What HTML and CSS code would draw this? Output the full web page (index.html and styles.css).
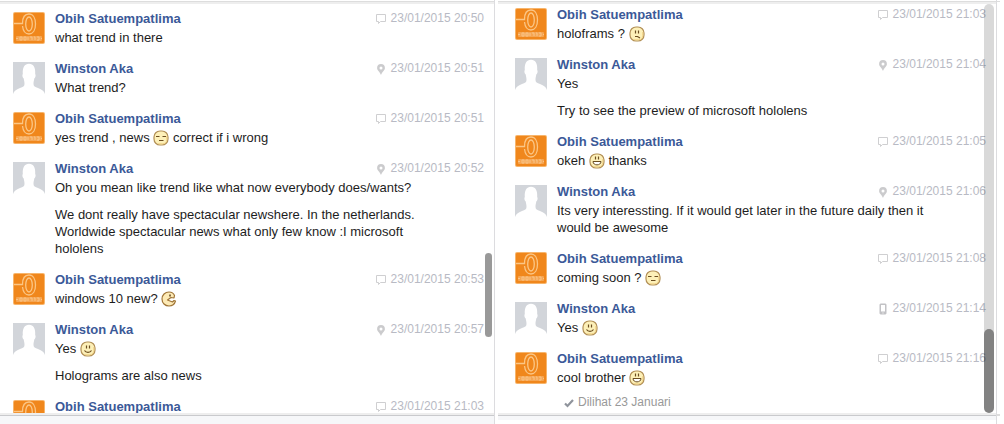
FILE: index.html
```
<!DOCTYPE html>
<html lang="id">
<head>
<meta charset="utf-8">
<title>Obih Satuempatlima</title>
<link rel="stylesheet" href="styles.css">
</head>
<body>
<svg class="sprite" aria-hidden="true">
  <defs>
    <symbol id="logo" viewBox="0 0 32 32">
      <rect width="32" height="32" rx="2" fill="#f7b56c"/>
      <rect x="1" y="1" width="30" height="30" rx="1" fill="#f0871c"/>
      <g fill="none" stroke="#fbc685" stroke-width="1.300">
        <path d="M1 11.500h8.500C9.500 5 12 2 16 2s6.500 4 6.500 10-2.500 10-6.500 10-6-3.500-6.500-8"/>
        <ellipse cx="16" cy="12" rx="3.300" ry="7"/>
      </g>
      <rect x="3" y="24" width="26" height="5" rx="1" fill="#f5a654"/>
      <path d="M3 26.500h2M7 25h2v3H7zM11 25h2v3h-2zM15 25v3M17 25h2v3M21 25h1v3M24 25h2v3h-2M28 26.500h1" fill="none" stroke="#f9c487"/>
    </symbol>
    <symbol id="person" viewBox="0 0 32 32">
      <rect width="32" height="32" fill="#d2d5da"/>
      <path d="M0 32c1-3 3-4.500 7-6 3-1 4.500-1.500 4.500-4 0-2-.3-3-.8-5.500-1.300-1-1.700-3.500-.9-4.500C9.300 5.500 11.500 1.700 16 1.700S22.700 5.500 22.200 12c.8 1 .4 3.500-.9 4.500-.5 2.500-.8 3.500-.8 5.500 0 2.500 1.500 3 4.500 4 4 1.500 6 3 7 6z" fill="#fff"/>
    </symbol>
    <symbol id="chat" viewBox="0 0 10 10">
      <path d="M.5 .5h9v7h-5l-2 2v-2h-2z" fill="none" stroke="#cfcfd1"/>
    </symbol>
    <symbol id="pin" viewBox="0 0 10 10">
      <path d="M5 0a3.900 3.900 0 0 0-3.900 3.900C1.100 6.700 4 7.500 5 11 6 7.500 8.900 6.700 8.900 3.900A3.900 3.900 0 0 0 5 0zm0 2.400a1.500 1.500 0 1 1 0 3 1.500 1.500 0 0 1 0-3z" fill="#cbcbcd" fill-rule="evenodd"/>
    </symbol>
    <symbol id="phone" viewBox="0 0 10 10">
      <path d="M2.500-.5h5l1 1v9l-1 1h-5l-1-1v-9zM3 1v6.500h4V1zM4.500 8.500v1h1v-1z" fill="#c2c2c5" fill-rule="evenodd"/>
    </symbol>
    <symbol id="face" viewBox="0 0 16 16">
      <rect x="1" y="1" width="14" height="14" rx="6" fill="#fdf0b8" stroke="#b28f55" stroke-width="1.200"/>
      <path d="M5 13.700h4.500q4.200 0 4.200-4.200V6" fill="none" stroke="#f3d589"/>
    </symbol>
    <symbol id="smile" viewBox="0 0 16 16">
      <use href="#face"/>
      <path d="M6.500 4.500v3M9.500 4.500v3M4.500 9.500c1.500 2.500 5.500 2.500 7 0" fill="none" stroke="#6b4d20" stroke-width="1.200"/>
    </symbol>
    <symbol id="grin" viewBox="0 0 16 16">
      <use href="#face"/>
      <path d="M6.500 3.500v3M9.500 3.500v3" stroke="#6b4d20" stroke-width="1.200"/>
      <path d="M4 8.500h8c0 4.500-8 4.500-8 0z" fill="#fff" stroke="#6b4d20"/>
    </symbol>
    <symbol id="squint" viewBox="0 0 16 16">
      <use href="#face"/>
      <path d="M3 6.500h3.500M9.500 6.500H13M6 10.500h4.500" stroke="#6b4d20" stroke-width="1.100"/>
    </symbol>
    <symbol id="unsure" viewBox="0 0 16 16">
      <use href="#face"/>
      <path d="M6.500 4.500v3M9.500 4.500v3M6 10.500h2.500l2.500 1.500" fill="none" stroke="#6b4d20" stroke-width="1.200"/>
    </symbol>
    <symbol id="pacman" viewBox="0 0 16 16">
      <path d="M13.500 4.500C12.500 2 10.500 1 8 1 4 1 1 4 1 8s3 7 7 7c3 0 5.500-1.500 6.500-5L13 9.500l-1.500 1.500-5-2L10 6.500l3 .5z" fill="#fdeab5" stroke="#a07537" stroke-width="1.200" stroke-linejoin="round"/>
      <path d="M9 3.500v2" stroke="#5c401b" stroke-width="1.500"/>
    </symbol>
    <symbol id="check" viewBox="0 0 10 10">
      <path d="M1 5.500l2.500 2.500L9 2" fill="none" stroke="#8f949c" stroke-width="2.200"/>
    </symbol>
  </defs>
</svg>
<main class="chats">
  <section class="panel">
    <div class="viewport">
      <ol class="messages">
        <li class="message"><svg class="avatar"><use href="#logo"/></svg><div class="content"><header class="head"><a class="name" href="#">Obih Satuempatlima</a><span class="time"><svg class="source"><use href="#chat"/></svg>23/01/2015 20:50</span></header><p>what trend in there</p></div></li>
        <li class="message"><svg class="avatar"><use href="#person"/></svg><div class="content"><header class="head"><a class="name" href="#">Winston Aka</a><span class="time"><svg class="source"><use href="#pin"/></svg>23/01/2015 20:51</span></header><p>What trend?</p></div></li>
        <li class="message"><svg class="avatar"><use href="#logo"/></svg><div class="content"><header class="head"><a class="name" href="#">Obih Satuempatlima</a><span class="time"><svg class="source"><use href="#chat"/></svg>23/01/2015 20:51</span></header><p>yes trend , news <svg class="emoji"><use href="#squint"/></svg> correct if i wrong</p></div></li>
        <li class="message"><svg class="avatar"><use href="#person"/></svg><div class="content"><header class="head"><a class="name" href="#">Winston Aka</a><span class="time"><svg class="source"><use href="#pin"/></svg>23/01/2015 20:52</span></header><p>Oh you mean like trend like what now everybody does/wants?</p><p>We dont really have spectacular newshere. In the netherlands. Worldwide spectacular news what only few know :I microsoft hololens</p></div></li>
        <li class="message"><svg class="avatar"><use href="#logo"/></svg><div class="content"><header class="head"><a class="name" href="#">Obih Satuempatlima</a><span class="time"><svg class="source"><use href="#chat"/></svg>23/01/2015 20:53</span></header><p>windows 10 new? <svg class="emoji"><use href="#pacman"/></svg></p></div></li>
        <li class="message"><svg class="avatar"><use href="#person"/></svg><div class="content"><header class="head"><a class="name" href="#">Winston Aka</a><span class="time"><svg class="source"><use href="#pin"/></svg>23/01/2015 20:57</span></header><p>Yes <svg class="emoji"><use href="#smile"/></svg></p><p>Holograms are also news</p></div></li>
        <li class="message"><svg class="avatar"><use href="#logo"/></svg><div class="content"><header class="head"><a class="name" href="#">Obih Satuempatlima</a><span class="time"><svg class="source"><use href="#chat"/></svg>23/01/2015 21:03</span></header></div></li>
      </ol>
      <div class="scrollbar"><div class="thumb"></div></div>
    </div>
    <div class="footer"></div>
  </section>
  <section class="panel panel-end">
    <div class="viewport">
      <ol class="messages">
        <li class="message"><svg class="avatar"><use href="#logo"/></svg><div class="content"><header class="head"><a class="name" href="#">Obih Satuempatlima</a><span class="time"><svg class="source"><use href="#chat"/></svg>23/01/2015 21:03</span></header><p>holoframs ? <svg class="emoji"><use href="#unsure"/></svg></p></div></li>
        <li class="message"><svg class="avatar"><use href="#person"/></svg><div class="content"><header class="head"><a class="name" href="#">Winston Aka</a><span class="time"><svg class="source"><use href="#pin"/></svg>23/01/2015 21:04</span></header><p>Yes</p><p>Try to see the preview of microsoft hololens</p></div></li>
        <li class="message"><svg class="avatar"><use href="#logo"/></svg><div class="content"><header class="head"><a class="name" href="#">Obih Satuempatlima</a><span class="time"><svg class="source"><use href="#chat"/></svg>23/01/2015 21:05</span></header><p>okeh <svg class="emoji"><use href="#grin"/></svg> thanks</p></div></li>
        <li class="message"><svg class="avatar"><use href="#person"/></svg><div class="content"><header class="head"><a class="name" href="#">Winston Aka</a><span class="time"><svg class="source"><use href="#pin"/></svg>23/01/2015 21:06</span></header><p>Its very interessting. If it would get later in the future daily then it would be awesome</p></div></li>
        <li class="message"><svg class="avatar"><use href="#logo"/></svg><div class="content"><header class="head"><a class="name" href="#">Obih Satuempatlima</a><span class="time"><svg class="source"><use href="#chat"/></svg>23/01/2015 21:08</span></header><p>coming soon ? <svg class="emoji"><use href="#squint"/></svg></p></div></li>
        <li class="message"><svg class="avatar"><use href="#person"/></svg><div class="content"><header class="head"><a class="name" href="#">Winston Aka</a><span class="time"><svg class="source"><use href="#phone"/></svg>23/01/2015 21:14</span></header><p>Yes <svg class="emoji"><use href="#smile"/></svg></p></div></li>
        <li class="message"><svg class="avatar"><use href="#logo"/></svg><div class="content"><header class="head"><a class="name" href="#">Obih Satuempatlima</a><span class="time"><svg class="source"><use href="#chat"/></svg>23/01/2015 21:16</span></header><p>cool brother <svg class="emoji"><use href="#grin"/></svg></p><div class="seen"><svg class="source"><use href="#check"/></svg>Dilihat 23 Januari</div></div></li>
      </ol>
      <div class="scrollbar scrollbar-active"><div class="thumb"></div></div>
    </div>
    <div class="footer"></div>
  </section>
  <div class="edge"></div>
</main>
</body>
</html>
```
FILE: styles.css
```
* { box-sizing: border-box; }

body {
  margin: 0;
  background: #fff;
  color: #1d1d1d;
  font: 13px/17px "Liberation Sans", Arial, sans-serif;
}

.sprite { position: absolute; width: 0; height: 0; }

.chats {
  display: grid;
  grid-template-columns: 495fr 502fr 3px;
  height: 100vh;
  padding-right: 4px;
}

.panel {
  display: flex;
  flex-direction: column;
  min-width: 0;
  min-height: 0;
  padding-top: 1px;
  border-right: 1px solid #dcdcdf;
}

.panel-end { margin-left: 3px; padding-bottom: 4px; }

.viewport {
  position: relative;
  flex: 1;
  min-height: 0;
  overflow: hidden;
  border-top: 1px solid #ddd;
  border-bottom: 2px solid #eee;
  box-shadow: inset 0 2px #eee;
}

.footer {
  flex: none;
  height: 9px;
  border-top: 1px solid #c9cacd;
  background: #f6f7f9;
}

.panel-end .footer { height: 5px; }

.messages {
  display: flex;
  flex-direction: column;
  gap: 14px;
  margin: 0;
  padding: 8px 10px 0 13px;
  list-style: none;
}

.panel-end .messages { padding: 4px 10px 0 17px; }

.message { display: flex; gap: 10px; }

.avatar { flex: none; width: 32px; height: 32px; margin-top: 2px; }

.content { flex: 1; min-width: 0; }

.head {
  display: flex;
  justify-content: space-between;
  margin-bottom: 2px;
}

.name { color: #3b5998; font-weight: bold; text-decoration: none; }

.time {
  display: flex;
  align-items: center;
  gap: 5px;
  color: #b8bac4;
  font-size: 12px;
}

.source { flex: none; width: 10px; height: 10px; overflow: visible; }

.source use { overflow: visible; }

symbol { overflow: visible; }

p { max-width: 380px; margin: 0; }

p + p { margin-top: 10px; }

.emoji {
  width: 16px;
  height: 16px;
  margin: -2px 0;
  vertical-align: -2px;
}

.seen {
  display: flex;
  align-items: center;
  gap: 4px;
  margin-top: 8px;
  padding-left: 7px;
  color: #999;
  font-size: 12px;
}

.scrollbar {
  position: absolute;
  top: 1px;
  right: 2px;
  bottom: 0;
  width: 7px;
}

.thumb {
  position: absolute;
  top: 61%;
  right: 0;
  width: 100%;
  height: 84px;
  border-radius: 5px;
  background: rgba(0, 0, 0, 0.4);
}

.scrollbar-active {
  top: 2px;
  width: 10px;
  border-radius: 5px;
  background: rgba(0, 0, 0, 0.15);
}

.scrollbar-active .thumb { top: auto; bottom: 0; }

.edge {
  margin: 1px 0 8px;
  border-top: 1px solid #ddd;
  border-bottom: 2px solid #ddd;
}
```
